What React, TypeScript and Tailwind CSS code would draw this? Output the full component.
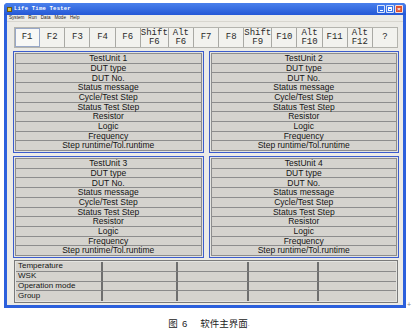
import React from 'react';

const keys: string[][] = [
  ['F1'], ['F2'], ['F3'], ['F4'], ['F6'], ['Shift', 'F6'], ['Alt', 'F6'], ['F7'],
  ['F8'], ['Shift', 'F9'], ['F10'], ['Alt', 'F10'], ['F11'], ['Alt', 'F12'], ['?'],
];

const unitRows = [
  'DUT type',
  'DUT No.',
  'Status message',
  'Cycle/Test Step',
  'Status Test Step',
  'Resistor',
  'Logic',
  'Frequency',
  'Step runtime/Tol.runtime',
];

const tableRows = ['Temperature', 'WSK', 'Operation mode', 'Group'];

const UnitPanel: React.FC<{ n: number }> = ({ n }) => (
  <div className="h-[102px] border border-[#3c5ccc] p-[1px] flex flex-col bg-[#e4e4e0]">
    {[`TestUnit ${n}`, ...unitRows].map((label, i) => (
      <div
        key={i}
        className={`flex-1 flex items-center justify-center bg-[#d5d3ce] border-x border-b border-[#8d8d8d] ${i === 0 ? 'border-t' : ''} text-[8.5px] leading-none text-[#141414]`}
      >
        {label}
      </div>
    ))}
  </div>
);

const App: React.FC = () => {
  return (
    <div
      className="relative w-[412px] h-[333px] bg-white overflow-hidden"
      style={{ fontFamily: '"Liberation Sans", Arial, sans-serif' }}
    >
      {/* Window */}
      <div className="ml-[4px] mt-[3px] w-[402px] h-[305px] flex flex-col rounded-t-[4px] bg-[#2c60dc] px-[3px] pb-[3px]">
        {/* Title bar */}
        <div className="h-[12px] flex items-center bg-gradient-to-b from-[#4a80ec] to-[#2458d6] -mx-[3px] px-[2px] rounded-t-[4px]">
          <div className="w-[5px] h-[5px] bg-[#e2c640] border border-[#6b5a10] ml-[1px]" />
          <span
            className="ml-[2px] text-[5.6px] font-bold text-white tracking-[0.2px]"
            style={{ fontFamily: '"Liberation Mono", monospace' }}
          >
            Life Time Tester
          </span>
          <div className="ml-auto flex gap-[1px] mr-[1px]">
            <div className="w-[8px] h-[8px] rounded-[1px] border border-white/80 bg-[#3a74ea] flex items-end justify-center pb-[1px]">
              <div className="w-[3px] h-[1px] bg-white" />
            </div>
            <div className="w-[8px] h-[8px] rounded-[1px] border border-white/80 bg-[#3a74ea] flex items-center justify-center">
              <div className="w-[4px] h-[4px] border border-white border-t-2" />
            </div>
            <div className="w-[8px] h-[8px] rounded-[1px] border border-white/80 bg-[#e0522e] flex items-center justify-center text-white text-[6px] font-bold leading-none">
              ×
            </div>
          </div>
        </div>

        {/* Client area */}
        <div className="flex-1 flex flex-col bg-[#ecebe6]">
          {/* Menu bar */}
          <div className="h-[7px] flex items-center gap-[4px] px-[2px] text-[4.6px] text-[#222] border-b border-[#d8d6cf]">
            <span>System</span>
            <span>Run</span>
            <span>Data</span>
            <span>Mode</span>
            <span>Help</span>
          </div>

          <div className="flex-1 flex flex-col pl-[6px] pr-[4px] pt-[5px] pb-[2px]">
            {/* Function key toolbar */}
            <div
              className="ml-[1px] mr-[1px] h-[21px] flex border border-[#b4b4ae] bg-[#f2f2ee]"
              style={{ fontFamily: '"Liberation Mono", "DejaVu Sans Mono", monospace' }}
            >
              {keys.map((k, i) => (
                <div
                  key={i}
                  className={`flex-1 flex flex-col items-center justify-center border-r border-[#a9a9a4] last:border-r-0 text-[9px] leading-[9px] text-[#2a2a2a] ${i === 0 ? 'bg-[#f8f8f6] outline outline-1 outline-[#98a8c8] -outline-offset-1' : ''}`}
                >
                  {k.map((line, j) => (
                    <span key={j}>{line}</span>
                  ))}
                </div>
              ))}
            </div>

            {/* Test units */}
            <div className="mt-[3px] grid grid-cols-2 gap-x-[5px] gap-y-[3px]">
              <UnitPanel n={1} />
              <UnitPanel n={2} />
              <UnitPanel n={3} />
              <UnitPanel n={4} />
            </div>

            {/* Bottom table */}
            <div className="mt-[2px] ml-[1px] mr-[1px] h-[43px] border border-[#7a7a7a] p-[1px] bg-[#e4e4e0]">
              <div className="h-full grid grid-cols-[87px_75px_71px_70px_1fr] grid-rows-4 bg-[#d5d3ce]">
                {tableRows.map((label, r) => (
                  <React.Fragment key={r}>
                    <div className={`flex items-center pl-[2px] text-[8px] leading-none text-[#141414] border-r-2 border-[#6e6e6e] ${r < 3 ? 'border-b border-b-[#8a8a8a]' : ''}`}>
                      {label}
                    </div>
                    {[0, 1, 2, 3].map((c) => (
                      <div
                        key={c}
                        className={`${c < 3 ? 'border-r-2 border-[#6e6e6e]' : ''} ${r < 3 ? 'border-b border-b-[#8a8a8a]' : ''}`}
                      />
                    ))}
                  </React.Fragment>
                ))}
              </div>
            </div>
          </div>
        </div>
      </div>

      {/* marker */}
      <span className="absolute left-[407px] top-[301px] text-[7px] text-[#888] leading-none">+</span>

      {/* Caption */}
      <div
        className="mt-[10px] flex justify-center pl-[6px] text-[9.5px] leading-[12px] text-[#222]"
        style={{ fontFamily: '"Liberation Sans", "Noto Sans CJK SC", sans-serif' }}
      >
        <span>图</span>
        <span className="ml-[4px]">6</span>
        <span className="ml-[13px]">软件主界面</span>
        <span className="text-[#888] text-[7px]">.</span>
      </div>
    </div>
  );
};

export default App;
